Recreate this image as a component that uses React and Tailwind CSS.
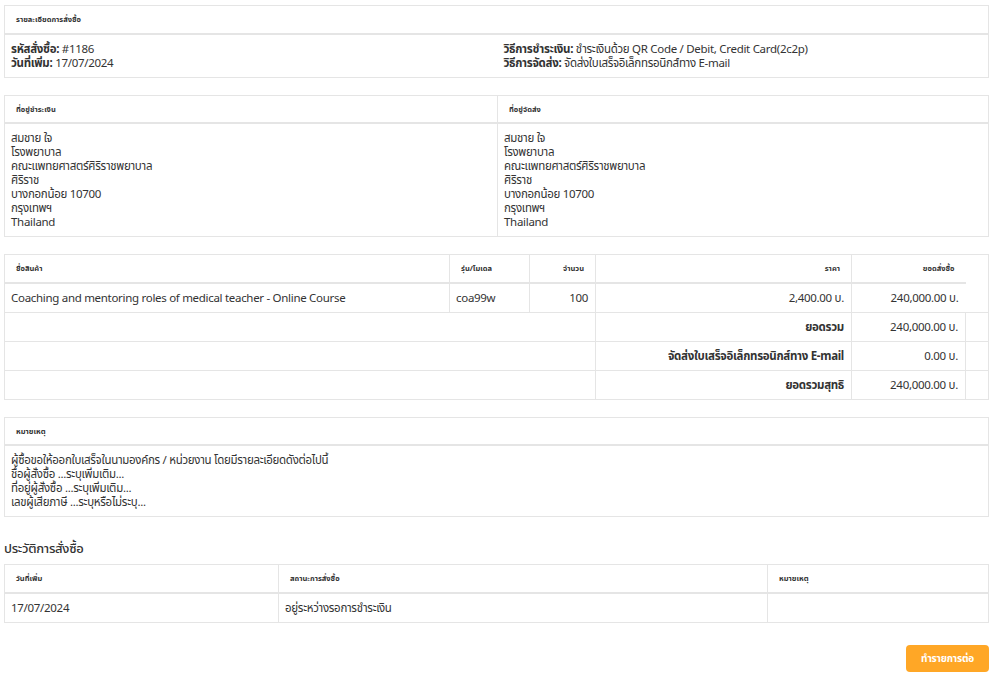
import React from 'react';

const th = 'h-[28px] border border-[#e5e5e5] border-b-2 px-[11px] text-[7.5px] leading-[10px] font-bold text-[#333] align-middle';
const td = 'border border-[#e5e5e5] pl-[6px] pr-[7px] py-[7px] text-[11.5px] leading-[14px] tracking-[-0.3px] text-[#333] align-top';

const address = ['สมชาย ใจ', 'โรงพยาบาล', 'คณะแพทยศาสตร์ศิริราชพยาบาล', 'ศิริราช', 'บางกอกน้อย 10700', 'กรุงเทพฯ', 'Thailand'];

const notes = [
  'ผู้ซื้อขอให้ออกใบเสร็จในนามองค์กร / หน่วยงาน โดยมีรายละเอียดดังต่อไปนี้',
  'ชื่อผู้สั่งซื้อ ...ระบุเพิ่มเติม...',
  'ที่อยู่ผู้สั่งซื้อ ...ระบุเพิ่มเติม...',
  'เลขผู้เสียภาษี ...ระบุหรือไม่ระบุ...',
];

const totals = [
  { label: 'ยอดรวม', value: '240,000.00 บ.' },
  { label: 'จัดส่งใบเสร็จอิเล็กทรอนิกส์ทาง E-mail', value: '0.00 บ.' },
  { label: 'ยอดรวมสุทธิ', value: '240,000.00 บ.' },
];

// every text line is pinned to 14px so the Thai fallback font can't stretch rows
const Line = ({ children, className = '' }) => (
  <div className={`h-[14px] whitespace-nowrap ${className}`}>{children}</div>
);

const Lines = ({ items }) => items.map((l, i) => <Line key={i}>{l}</Line>);

export default function App() {
  return (
    <div
      className="min-h-[678px] bg-white pl-[4px] pr-[3px] pt-[5px] pb-[6px]"
      style={{ fontFamily: '"Noto Sans", "Noto Sans Thai", "Liberation Sans", sans-serif' }}
    >
      {/* Order details */}
      <table className="w-full border-collapse">
        <thead>
          <tr>
            <th colSpan={2} className={`${th} text-left`}>รายละเอียดการสั่งซื้อ</th>
          </tr>
        </thead>
        <tbody>
          <tr>
            <td className={`${td} w-[493px] border-r-0`}>
              <Line><b>รหัสสั่งซื้อ:</b> #1186</Line>
              <Line><b>วันที่เพิ่ม:</b> 17/07/2024</Line>
            </td>
            <td className={`${td} border-l-0`}>
              <Line><b>วิธีการชำระเงิน:</b> ชำระเงินด้วย QR Code / Debit, Credit Card(2c2p)</Line>
              <Line><b>วิธีการจัดส่ง:</b> จัดส่งใบเสร็จอิเล็กทรอนิกส์ทาง E-mail</Line>
            </td>
          </tr>
        </tbody>
      </table>

      {/* Addresses */}
      <table className="mt-[17px] w-full border-collapse">
        <thead>
          <tr>
            <th className={`${th} w-[493px] text-left`}>ที่อยู่ชำระเงิน</th>
            <th className={`${th} text-left`}>ที่อยู่จัดส่ง</th>
          </tr>
        </thead>
        <tbody>
          <tr>
            <td className={td}><Lines items={address} /></td>
            <td className={td}><Lines items={address} /></td>
          </tr>
        </tbody>
      </table>

      {/* Products */}
      <table className="mt-[17px] w-full table-fixed border-collapse">
        <thead>
          <tr>
            <th className={`${th} w-[445px] text-left`}>ชื่อสินค้า</th>
            <th className={`${th} w-[80px] text-left`}>รุ่น/โมเดล</th>
            <th className={`${th} w-[66px] text-right`}>จำนวน</th>
            <th className={`${th} w-[256px] text-right`}>ราคา</th>
            <th className={`${th} w-[114px] border-r-0 text-right`}>ยอดสั่งซื้อ</th>
            <th className="border-t border-r border-[#e5e5e5]"></th>
          </tr>
        </thead>
        <tbody>
          <tr>
            <td className={td}><Line>Coaching and mentoring roles of medical teacher - Online Course</Line></td>
            <td className={td}><Line>coa99w</Line></td>
            <td className={`${td} text-right`}><Line>100</Line></td>
            <td className={`${td} text-right`}><Line>2,400.00 บ.</Line></td>
            <td className={`${td} border-r-0 text-right`}><Line>240,000.00 บ.</Line></td>
            <td className="border-r border-[#e5e5e5]"></td>
          </tr>
          {totals.map((t) => (
            <tr key={t.label}>
              <td colSpan={3} className={td}><Line /></td>
              <td className={`${td} text-right font-bold`}><Line>{t.label}</Line></td>
              <td className={`${td} text-right`}><Line>{t.value}</Line></td>
              <td className={td}></td>
            </tr>
          ))}
        </tbody>
      </table>

      {/* Notes */}
      <table className="mt-[17px] w-full border-collapse">
        <thead>
          <tr>
            <th className={`${th} text-left`}>หมายเหตุ</th>
          </tr>
        </thead>
        <tbody>
          <tr>
            <td className={td}><Lines items={notes} /></td>
          </tr>
        </tbody>
      </table>

      {/* History */}
      <h3 className="mt-[22px] mb-[7px] h-[18px] text-[13px] leading-[18px] font-medium tracking-[-0.3px] text-[#333]">ประวัติการสั่งซื้อ</h3>
      <table className="w-full table-fixed border-collapse">
        <thead>
          <tr>
            <th className={`${th} w-[274px] text-left`}>วันที่เพิ่ม</th>
            <th className={`${th} w-[489px] text-left`}>สถานะการสั่งซื้อ</th>
            <th className={`${th} text-left`}>หมายเหตุ</th>
          </tr>
        </thead>
        <tbody>
          <tr>
            <td className={td}><Line>17/07/2024</Line></td>
            <td className={td}><Line>อยู่ระหว่างรอการชำระเงิน</Line></td>
            <td className={td}></td>
          </tr>
        </tbody>
      </table>

      <div className="mt-[22px] flex justify-end">
        <button className="flex h-[27px] w-[83px] items-center justify-center rounded-[4px] bg-[#ffa726] text-[10px] leading-[14px] font-bold tracking-[-0.2px] text-white">
          ทำรายการต่อ
        </button>
      </div>
    </div>
  );
}
